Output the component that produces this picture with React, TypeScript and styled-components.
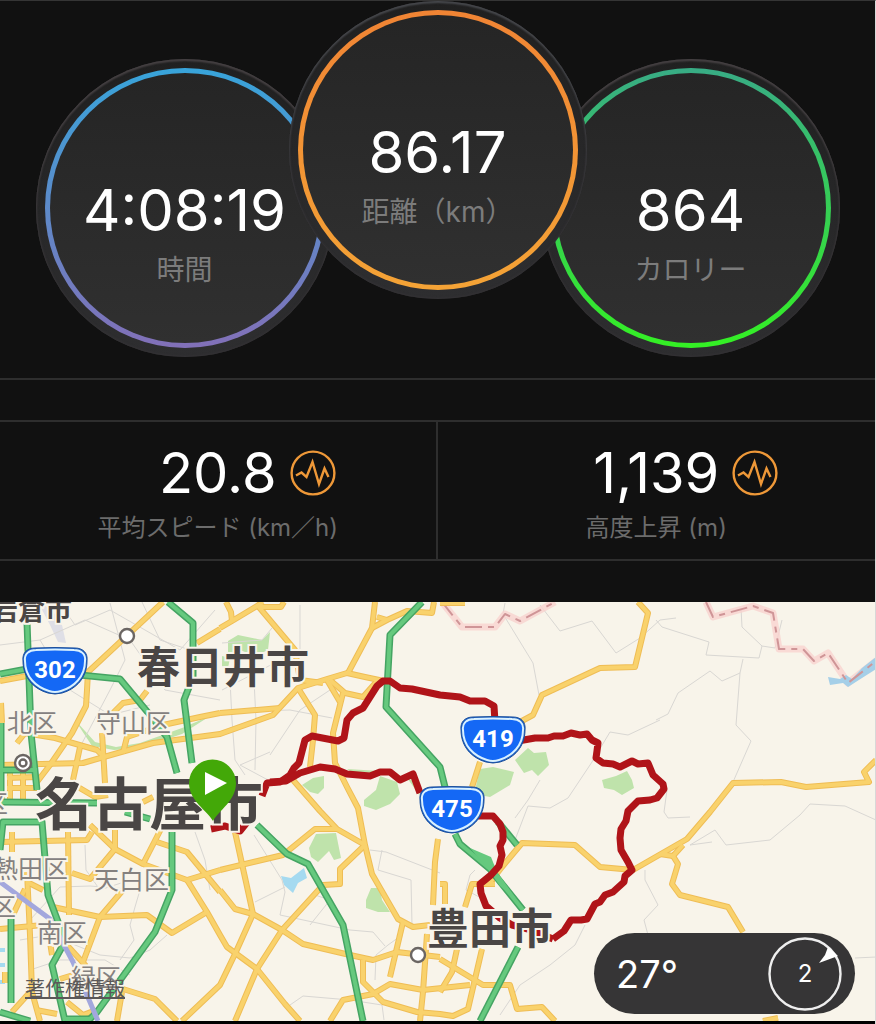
import React from 'react';
import styled, { createGlobalStyle } from 'styled-components';

const sans = `Inter, "Noto Sans CJK JP", "Liberation Sans", sans-serif`;

const GlobalStyle = createGlobalStyle`
  *, *::before, *::after { box-sizing: border-box; }
  body { margin: 0; background: #000; font-family: ${sans}; }
`;

const Page = styled.main`
  background: #111;
  border-top: 1px solid #353535;
  border-right: 1px solid #d8d8d8;
  overflow: hidden;
`;

/* ---------- summary dials ---------- */

const Dials = styled.section`
  display: flex;
  justify-content: center;
  align-items: flex-end;
  height: 377px;
  padding-bottom: 21px;
`;

const Dial = styled.div<{ $front?: boolean }>`
  flex: none;
  width: 298px;
  height: 298px;
  padding: 9px;
  margin: ${p => (p.$front ? '0 -45px 58px' : '0')};
  z-index: ${p => (p.$front ? 1 : 0)};
  border-radius: 50%;
  background: linear-gradient(#202020, #2e2e30);
  box-shadow: inset 0 2px 2px ${p => (p.$front ? '#45474b' : '#454042')}, inset 0 0 2px 1px #343235;
`;

const Ring = styled.div<{ $from: string; $to: string }>`
  width: 100%;
  height: 100%;
  padding: 5px;
  border-radius: 50%;
  background: linear-gradient(${p => p.$from}, ${p => p.$to});
`;

const Face = styled.div`
  display: flex;
  flex-direction: column;
  align-items: center;
  width: 100%;
  height: 100%;
  padding-top: 105px;
  border-radius: 50%;
  background: linear-gradient(#252525, #303030);
`;

const Value = styled.span`
  color: #fff;
  font-size: 58px;
  line-height: 64px;
  white-space: nowrap;
`;

const DialLabel = styled.span`
  margin-top: 10px;
  color: #7c7c7c;
  font-size: 28px;
  line-height: 36px;
  white-space: nowrap;
`;

/* ---------- stats row ---------- */

const Stats = styled.section`
  margin: 0 0 41px;
  padding-top: 40px;
  border-top: 2px solid #2e2e2e;
`;

const StatRow = styled.div`
  display: grid;
  grid-template-columns: 1fr 1fr;
  border: solid #2e2e2e;
  border-width: 2px 0;
`;

const Stat = styled.div`
  height: 137px;
  padding-top: 19px;
  text-align: center;
  &:first-child { border-right: 2px solid #2e2e2e; }
`;

const StatTop = styled.div`
  display: grid;
  grid-template-columns: 1fr auto 1fr;
  align-items: center;
  column-gap: 13px;
`;

const StatValue = styled(Value)`
  grid-column: 2;
  font-size: 56px;
`;

const ChartButton = styled.button`
  display: block;
  width: 46px;
  height: 46px;
  padding: 0;
  border: 0;
  background: none;
  cursor: pointer;
  svg { display: block; }
`;

const StatLabel = styled.div`
  margin-top: 5px;
  color: #6c6c6c;
  font-size: 24px;
  line-height: 36px;
`;

/* ---------- map ---------- */

const MapPanel = styled.section`
  position: relative;
  border-bottom: 3px solid #000;
`;

const MapSvg = styled.svg`
  display: block;
  width: 100%;
  height: auto;
  background: #f8f4ea;
`;

const City = styled.text`
  font-family: "Noto Sans CJK JP", sans-serif;
  font-weight: 700;
  fill: #4a4645;
  stroke: #f8f4ea;
  stroke-width: 4px;
  paint-order: stroke;
`;

const Ward = styled(City)`
  font-weight: 400;
  font-size: 25px;
  fill: #85817f;
`;

const ShieldNumber = styled.text`
  font: 700 24px Roboto, sans-serif;
  fill: #fff;
  text-anchor: middle;
`;

const Legal = styled.a`
  position: absolute;
  left: 25px;
  bottom: 20px;
  color: #5b5858;
  font-size: 20px;
  line-height: 24px;
  text-decoration: underline;
`;

const Weather = styled.aside`
  position: absolute;
  right: 20px;
  bottom: 7px;
  display: flex;
  align-items: center;
  justify-content: space-between;
  width: 261px;
  height: 81px;
  padding: 0 13px 0 22px;
  border-radius: 41px;
  background: #363536;
  color: #fff;
`;

const Temperature = styled.span`
  font-size: 38px;
  line-height: 48px;
`;

const Wind = styled.div`
  position: relative;
  display: grid;
  place-items: center;
  width: 74px;
  height: 74px;
  font-size: 24px;
  svg { position: absolute; inset: 0; }
`;

const minorRoads = [
  '0,645 40,640 85,620 130,640 165,690 220,700',
  '40,640 70,690 110,715 150,705',
  '60,603 75,625 110,610 180,650 215,610',
  '80,747 110,690 125,660 110,603',
  '142,602 160,640 190,650',
  '222,690 300,650 300,605',
  '222,643 262,640 272,628',
  '230,680 232,720 235,760 245,775',
  '254,680 256,720 255,770',
  '270,755 300,710 330,690',
  '270,752 240,765 268,780',
  '222,712 290,710 332,718',
  '505,603 503,614 533,663 539,695',
  '540,605 560,631 592,621 616,653 640,638 660,620 676,618',
  '656,720 668,714 678,693 710,671 722,681 740,673 743,659',
  '656,620 662,627 709,642 706,655 759,658 762,646 742,627 741,608',
  '762,646 775,648 782,620',
  '740,673 736,725 751,741 733,782',
  '660,720 628,735 610,732 592,762 568,798 550,808 528,806 515,840',
  '667,790 664,812 668,818 690,817',
  '712,842 690,845 715,830 726,845 770,840 800,815 810,804 845,806 876,820',
  '645,870 645,880 658,905 644,920 648,935',
  '585,925 575,945 550,965 520,985 500,1015',
  '254,835 282,880 285,892 280,915 350,930 373,932 385,946',
  '255,902 285,887',
  '382,850 378,870 411,880 412,925',
  '370,850 386,852 440,873',
  '310,925 330,900 315,895',
  '375,980 376,955 388,945 402,935',
  '290,1005 303,996 350,1000 382,1005 384,1020',
  '30,920 60,887 90,886 140,890 135,907 130,925 134,940 120,960',
  '20,940 50,935 100,955 130,958 150,950 167,935',
  '30,970 60,960 105,960 130,975',
  '85,845 86,870 100,890 130,880',
  '195,832 205,860 210,890',
  '855,958 876,957',
  '475,870 470,875 466,890 485,900',
  '515,818 528,800 540,780',
];

const yellowRoads = [
  '163,602 88,672 87,690 86,706 72,733 50,765 37,782',
  '0,681 27,676',
  '220,629 197,643',
  '147,691 140,700 123,703 110,716',
  '0,765 83,763 153,743 220,734 273,715 298,688 327,679 347,673 365,677 384,681',
  '220,713 200,717 163,725 127,737 123,753',
  '17,743 25,733 55,738 97,750 103,756',
  '102,733 105,783',
  '80,747 73,780',
  '1,703 2,723',
  '7,778 37,777',
  '7,788 37,788',
  '10,767 10,800',
  '23,767 23,800',
  '78,787 95,797 108,795',
  '143,802 153,797',
  '220,628 232,621 257,606 263,602',
  '232,621 231,612 226,602',
  '258,606 295,650 300,680 323,683',
  '260,607 281,607 284,602',
  '375,602 372,628 348,673',
  '377,617 387,620 407,611 432,613 434,602',
  '372,628 387,620',
  '220,713 280,708',
  '298,688 315,715 313,740 310,767',
  '327,680 340,702',
  '330,680 345,693 363,697 378,680',
  '343,693 333,733 335,763 347,787 358,808 365,845 372,874 398,919 413,927 430,925',
  '293,780 320,811 337,829 365,845',
  '220,870 283,855 315,829 337,829',
  '365,845 340,869 340,884 323,885 282,930 257,969 235,1021',
  '235,832 253,914',
  '220,890 235,909 253,914 282,930 303,944 350,955 373,960 397,952 440,957',
  '253,914 235,954 220,985 182,1021',
  '157,842 187,852 220,892',
  '187,880 207,912 220,935 227,947 257,969 285,1004 300,1021',
  '403,922 390,977',
  '330,1021 343,1000 373,994 390,984 423,990 470,985',
  '363,960 363,982 383,1002 417,1012 440,1014 453,1016 468,1009 482,949',
  '427,934 423,992 420,1021',
  '438,839 435,862 433,905',
  '0,842 87,840 92,832',
  '12,832 12,852',
  '68,832 69,915',
  '90,825 115,849 143,864 187,880 220,870',
  '115,829 115,849 90,879 72,873',
  '163,825 143,864',
  '27,872 30,935 32,992 40,1021',
  '27,882 43,890',
  '25,889 12,917',
  '53,907 100,917 147,915 172,933 207,912',
  '123,890 100,917 83,962',
  '0,929 43,925',
  '48,929 52,955',
  '65,943 86,966',
  '123,989 155,999 177,1021',
  '117,1021 122,992',
  '67,1002 83,1015 96,1010',
  '12,1012 30,992',
  '36,1010 57,1014',
  '60,979 83,972',
  '5,972 5,983',
  '638,602 648,613 635,667 600,668 542,695 533,715 520,722',
  '480,762 472,787',
  '440,603 465,603',
  '876,760 864,772 869,782 806,787 781,782 733,783 710,812 687,839 633,870 600,867 575,845 522,843 502,867 488,885',
  '683,845 673,856 660,854',
  '673,856 678,864 672,884 680,895 728,907 743,932',
  '495,884 472,884 465,907',
  '440,884 445,884 445,904',
  '440,959 483,985 510,985 517,1009 542,1007 555,1021',
  '457,949 452,972 440,992',
  '763,1021 778,1018',
];

const greenRoads = [
  '27,622 31,733 37,790',
  '0,674 27,669',
  '80,675 120,679 150,715 167,737 177,773',
  '168,602 193,623 193,677 184,700 192,763',
  '1,723 1,800',
  '0,770 37,770',
  '0,802 97,803',
  '0,850 3,822 42,822 48,895 60,927 63,945 52,965 65,1021',
  '11,917 11,1003',
  '172,832 172,890 155,932 97,1012 88,1021',
  '0,1012 30,1021',
  '66,1019 90,1019',
  '125,812 150,819',
  '257,825 287,854 308,864 343,925 363,1021',
  '422,602 390,635 386,707 440,767 445,787',
  '455,834 460,844 490,869 523,910',
  '498,822 517,845',
  '518,947 480,1021',
];

const parks = [
  '228,641 238,635 262,640 270,632 268,650 255,656 240,650 228,654',
  '302,785 313,778 324,776 324,788 318,794 310,792',
  '364,800 376,790 380,776 397,782 400,794 390,804 376,810 364,806',
  '405,775 416,784 420,796',
  '480,769 493,767 514,772 510,785 490,797 474,794',
  '515,760 528,748 534,753 546,752 549,765 538,776 532,770 524,773',
  '602,780 616,776 627,771 632,780 634,788 622,795 614,790 604,788',
  '309,848 316,834 336,833 341,858 334,860 329,851 318,862 311,857',
  '366,900 371,888 380,888 382,900 390,912 378,912 366,908',
  '380,771 347,769 353,773 376,775',
  '75,720 95,742 116,747 140,743 182,728 210,716 182,734 140,748 114,750 92,746',
  '222,656 230,658 228,668 222,666',
];

const route = [
  '211,829 225,826 240,831 248,821',
  '262,796 267,783 280,782 290,775 294,768 299,763 305,740 312,736 338,741 344,738 347,720 353,713 363,708 377,686 383,681 390,681 400,688 412,689 440,695 460,697 470,701 485,701 494,706 495,722',
  '270,782 286,781 300,773 320,767 335,769 347,774 370,776 380,772 390,772 400,780 413,774 420,793',
  '518,741 535,738 548,738 554,736 563,736 571,733 580,735 587,734 592,740 598,743 597,751 596,758 603,763 613,764 620,767 626,764 632,761 638,764 648,763 653,775 663,784 664,789 657,798 650,800 638,801 628,811 626,821 621,829 620,838 621,850 628,862 632,870 625,876 624,882 613,892 605,895 600,902 595,904 587,919 581,920 571,920 564,931 553,939',
  '478,816 493,816 500,824 503,832 503,840 500,846 502,855 499,866 491,875 480,884 481,893 486,906 500,918 512,925 528,929 553,939',
];

const prefectureBorder = [
  '442,602 462,627 495,627 505,614 520,621 555,602',
  '706,602 713,617 753,606 773,613 779,649 803,649 814,661 828,653 848,683 876,661',
];

type LineProps = { lines: string[]; color: string; width: number; opacity?: number; dash?: string };

const Lines = ({ lines, color, width, opacity, dash }: LineProps) => (
  <g fill="none" stroke={color} strokeWidth={width} strokeLinejoin="round" opacity={opacity} strokeDasharray={dash}>
    {lines.map(points => (
      <polyline key={points} points={points} />
    ))}
  </g>
);

const Shield = ({ x, y, n }: { x: number; y: number; n: string }) => (
  <g transform={`translate(${x} ${y})`}>
    <path d="M-20-23Q0-24 20-23C28-23 33-18 32-10C32 7 21 18 7 22Q0 24-7 22C-21 18-32 7-32-10C-33-18-28-23-20-23Z" fill="#1b5fc4" stroke="#1b4f9c" strokeWidth="1" />
    <path d="M-19-21Q0-22 19-21C26-21 31-17 30-10C30 6 19 16 6 20Q0 22-6 20C-19 16-30 6-30-10C-31-17-26-21-19-21Z" fill="#1468f5" stroke="#d9f1ff" strokeWidth="2" />
    <ShieldNumber x="0" y="7">{n}</ShieldNumber>
  </g>
);

const Pulse = () => (
  <svg width="46" height="46" viewBox="0 0 46 46" fill="none" stroke="#ee9838" strokeWidth="2.4" aria-hidden="true">
    <circle cx="23" cy="23" r="21.4" />
    <path d="M6 25.5L11.500 22.500L16.500 27L22.500 12L29 34L34.500 18.500L38.500 27" strokeLinejoin="miter" />
  </svg>
);

const dials = [
  { value: '4:08:19', label: '時間', from: '#38a4da', to: '#8270b8' },
  { value: '86.17', label: '距離（km）', from: '#f08434', to: '#f4a336', front: true },
  { value: '864', label: 'カロリー', from: '#38ac85', to: '#34f024' },
];

const stats = [
  { value: '20.8', label: '平均スピード (km／h)' },
  { value: '1,139', label: '高度上昇 (m)' },
];

const RouteMap = () => (
  <MapSvg viewBox="0 602 875 419" role="img" aria-label="ルートマップ">
    <path d="M38 602L52 610L62 625L66 643L58 642L50 625Z" fill="#dfdfe6" />
    <g fill="#bfe3ab">
      {parks.map(p => (
        <polygon key={p} points={p} />
      ))}
    </g>
    <g fill="#a5daf0">
      <path d="M281 876L291 878L304 868L307 878L298 883L293 893L284 885Z" />
      <path d="M0 948h5v4h-5zM0 963h5v4h-5zM0 980h5v4h-5z" />
    </g>
    <Lines lines={minorRoads} color="#d9d7d3" width={1} />
    <Lines lines={prefectureBorder} color="#f9d3cf" width={7} opacity={0.8} />
    <path d="M828 677L840 679L846 675L852 679L862 668L876 657L876 669L862 678L848 687L843 683L830 685Z" fill="#a5cfe8" />
    <Lines lines={prefectureBorder} color="#cf9597" width={2} dash="17 6 6 6" />
    <Lines lines={yellowRoads} color="#efbd55" width={6} />
    <Lines lines={yellowRoads} color="#f9d26c" width={4} />
    <Lines lines={greenRoads} color="#45a463" width={7} />
    <Lines lines={greenRoads} color="#66c97e" width={4} />
    <path d="M470 848L491 857L497 872L520 904L500 886L488 869Z" fill="#66c97e" />
    <Lines lines={['0,882 50,919 73,962 98,1021']} color="#a3a7dd" width={5} />
    <Lines lines={route} color="#b01419" width={7} />

    <City x="-9" y="620" fontSize="27">岩倉市</City>
    <City x="137" y="683" fontSize="43">春日井市</City>
    <City x="427" y="944" fontSize="42">豊田市</City>
    <City x="35" y="825" fontSize="57">名古屋市</City>
    <Ward x="7" y="732">北区</Ward>
    <Ward x="96" y="732">守山区</Ward>
    <Ward x="-17" y="813">区</Ward>
    <Ward x="-7" y="878">熱田区</Ward>
    <Ward x="94" y="889">天白区</Ward>
    <Ward x="-9" y="916">区</Ward>
    <Ward x="37" y="942">南区</Ward>
    <Ward x="71" y="987">緑区</Ward>

    <g fill="#fff" stroke="#6b6663" strokeWidth="2.4">
      <circle cx="127" cy="636" r="7" />
      <circle cx="418" cy="955" r="7" />
      <circle cx="23" cy="763" r="8" />
      <circle cx="23" cy="763" r="3.500" />
    </g>

    <Shield x={55} y={671} n="302" />
    <Shield x={493} y={740} n="419" />
    <Shield x={452} y={810} n="475" />

    <path d="M213 821C207 810 189 801 189 783A23.500 23.500 0 0 1 236 783C236 801 219 810 213 821Z" fill="#43a808" />
    <path d="M205 772L227 783L205 795Z" fill="#fff" />
  </MapSvg>
);

export default function App() {
  return (
    <>
      <GlobalStyle />
      <Page>
        <Dials>
          {dials.map(d => (
            <Dial key={d.label} $front={d.front}>
              <Ring $from={d.from} $to={d.to}>
                <Face>
                  <Value>{d.value}</Value>
                  <DialLabel>{d.label}</DialLabel>
                </Face>
              </Ring>
            </Dial>
          ))}
        </Dials>
        <Stats>
          <StatRow>
            {stats.map(s => (
              <Stat key={s.label}>
                <StatTop>
                  <StatValue>{s.value}</StatValue>
                  <ChartButton type="button" aria-label={s.label}>
                    <Pulse />
                  </ChartButton>
                </StatTop>
                <StatLabel>{s.label}</StatLabel>
              </Stat>
            ))}
          </StatRow>
        </Stats>
        <MapPanel>
          <RouteMap />
          <Legal href="#legal">著作権情報</Legal>
          <Weather>
            <Temperature>27°</Temperature>
            <Wind>
              <svg width="74" height="74" viewBox="0 0 74 74" aria-hidden="true">
                <circle cx="37" cy="37" r="35.500" fill="none" stroke="#eee" strokeWidth="2.400" />
                <path d="M60 10L70 19L51 26L57 18Z" fill="#fff" />
              </svg>
              2
            </Wind>
          </Weather>
        </MapPanel>
      </Page>
    </>
  );
}
